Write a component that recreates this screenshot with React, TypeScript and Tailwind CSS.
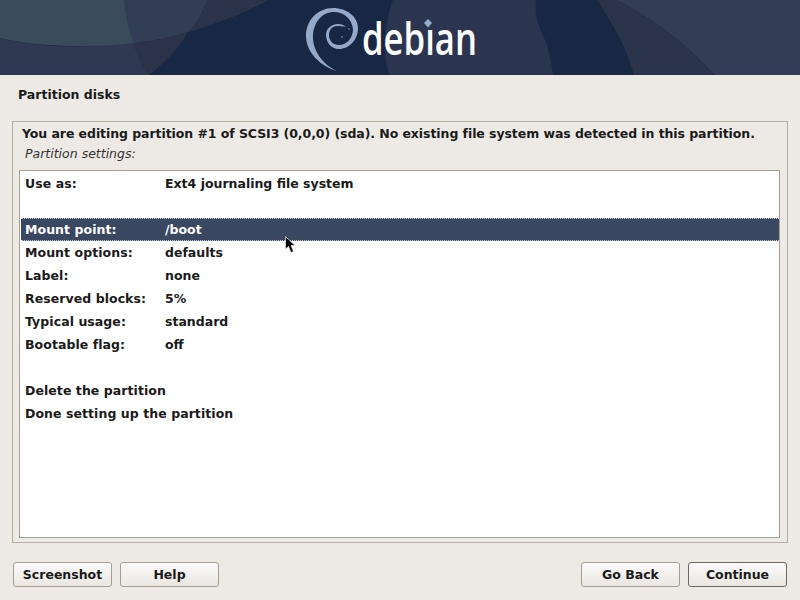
import React from 'react';

const rows: [string, string][] = [
  ['Use as:', 'Ext4 journaling file system'],
  ['', ''],
  ['Mount point:', '/boot'],
  ['Mount options:', 'defaults'],
  ['Label:', 'none'],
  ['Reserved blocks:', '5%'],
  ['Typical usage:', 'standard'],
  ['Bootable flag:', 'off'],
  ['', ''],
  ['Delete the partition', ''],
  ['Done setting up the partition', ''],
];

function Banner() {
  return (
    <svg className="block w-[800px] h-[75px]" viewBox="0 0 800 75">
      <rect width="800" height="75" fill="#182844" />
      {/* left circles */}
      <path d="M0 38C30 46 70 48 100 45C130 43 160 40 188 32C215 24 245 13 268 0H124C126 16 129 30 134 43C137 55 142 65 149 75H0Z" fill="#2e3850" />
      <path d="M124 0C126 16 129 30 134 43C160 40 170 37 188 32C198 22 203 11 207 0Z" fill="#333d56" />
      <path d="M0 0H124C126 16 129 30 134 43C118 45 100 46 82 46C50 46 25 44 0 38Z" fill="#3a4c5b" />
      <path d="M134 43C160 40 170 37 188 32C178 50 165 62 149 75C142 65 137 55 134 43Z" fill="#2a3349" />
      <path d="M207 0C203 11 198 22 188 32C215 24 245 13 268 0Z" fill="#2a3349" />
      {/* right shapes */}
      <path d="M393 0C387 18 384 35 385 50C385 60 387 68 390 75H553C551 62 549 50 545 40C540 28 534 18 536 0Z" fill="#2b3550" />
      <path d="M597 0C610 20 626 45 634 75H715C690 48 660 22 617 0Z" fill="#2a3349" />
      <path d="M617 0C660 22 690 48 715 75H800V0Z" fill="#333d56" />
      {/* swirl */}
      <path
        d="M337 71C320 66 306 52 306 36C306 20 318 8 333 8C347 8 358 17 358 28C358 40 349 49 339 49C331 49 326 42 326 35C326 28 332 24 338 24C341 24 344 25 346 27C343 26 340 26 337 26C332 26 329 30 329 35C329 41 333 45 339 45C347 45 353 38 353 29C352 19 344 12 334 12C322 12 314 22 313 35C312 50 323 65 337 71Z"
        fill="#95aaca"
      />
      <circle cx="342" cy="37" r="0.800" fill="#95aaca" />
      <circle cx="349" cy="29" r="0.700" fill="#95aaca" />
      <text
        x="362"
        y="55"
        textLength="115"
        lengthAdjust="spacingAndGlyphs"
        fill="#ffffff"
        fontFamily="'Open Sans', sans-serif"
        fontWeight="600"
        fontSize="46"
      >
        debian
      </text>
      <rect x="423" y="18" width="10" height="10" fill="#2b3550" />
      <path d="M428 19L432 23L428 27.500L424 23Z" fill="#8fb0cc" />
    </svg>
  );
}

function Btn({ label, dark }: { label: string; dark?: boolean }) {
  return (
    <button
      className={`w-[99px] h-[25px] pt-[2px] rounded-[3px] border text-[12.5px] font-bold text-[#1a1a1a] bg-gradient-to-b from-[#fbfaf9] to-[#eae7e2] ${
        dark ? 'border-[#6f675c]' : 'border-[#a89f90]'
      }`}
    >
      {label}
    </button>
  );
}

export default function App() {
  return (
    <div className="relative w-[800px] h-[600px] overflow-hidden bg-[#edeae5] text-[#1a1a1a] text-[12.5px] font-['DejaVu_Sans',sans-serif]">
      <Banner />
      <div className="h-[46px] pl-[18px] pt-[12px] leading-[15px] font-bold">Partition disks</div>

      <div className="mx-[12px] h-[422px] border border-[#b8ae9f] pt-[3px] pl-[6px] pr-[7px] pb-[4px] flex flex-col">
        <div className="pl-[3px] h-[18px] leading-[18px] font-bold whitespace-nowrap tracking-[-0.07px]">
          You are editing partition #1 of SCSI3 (0,0,0) (sda). No existing file system was detected in this partition.
        </div>
        <div className="pl-[6px] h-[27px] pt-[2px] leading-[18px] italic text-[#333333]">Partition settings:</div>
        <div className="flex-1 bg-white border border-[#a89f90] pt-[1px] pl-[1px]">
          {rows.map(([name, value], i) => {
            const active = name === 'Mount point:';
            return (
              <div
                key={i}
                className={`h-[23px] flex items-center pl-[4px] pt-[2px] font-bold whitespace-nowrap ${
                  active ? 'bg-[#3a4760] text-white border-y border-dotted border-[#c9cdd4]' : ''
                }`}
              >
                <span className="w-[140px] shrink-0 tracking-[0.06px]">{name}</span>
                <span>{value}</span>
              </div>
            );
          })}
        </div>
      </div>

      <div className="flex items-center justify-between pl-[13px] pr-[13px] mt-[19px]">
        <div className="flex gap-[8px]">
          <Btn label="Screenshot" />
          <Btn label="Help" />
        </div>
        <div className="flex gap-[8px]">
          <Btn label="Go Back" />
          <Btn label="Continue" dark />
        </div>
      </div>

      <svg className="absolute left-[285px] top-[236px]" width="11" height="17" viewBox="0 0 11 17">
        <path d="M0.500 0.500V13L3.500 10.500L6 16.500L8.500 15.500L6 9.500H10Z" fill="#000000" stroke="#ffffff" strokeWidth="0.600" />
      </svg>
    </div>
  );
}
